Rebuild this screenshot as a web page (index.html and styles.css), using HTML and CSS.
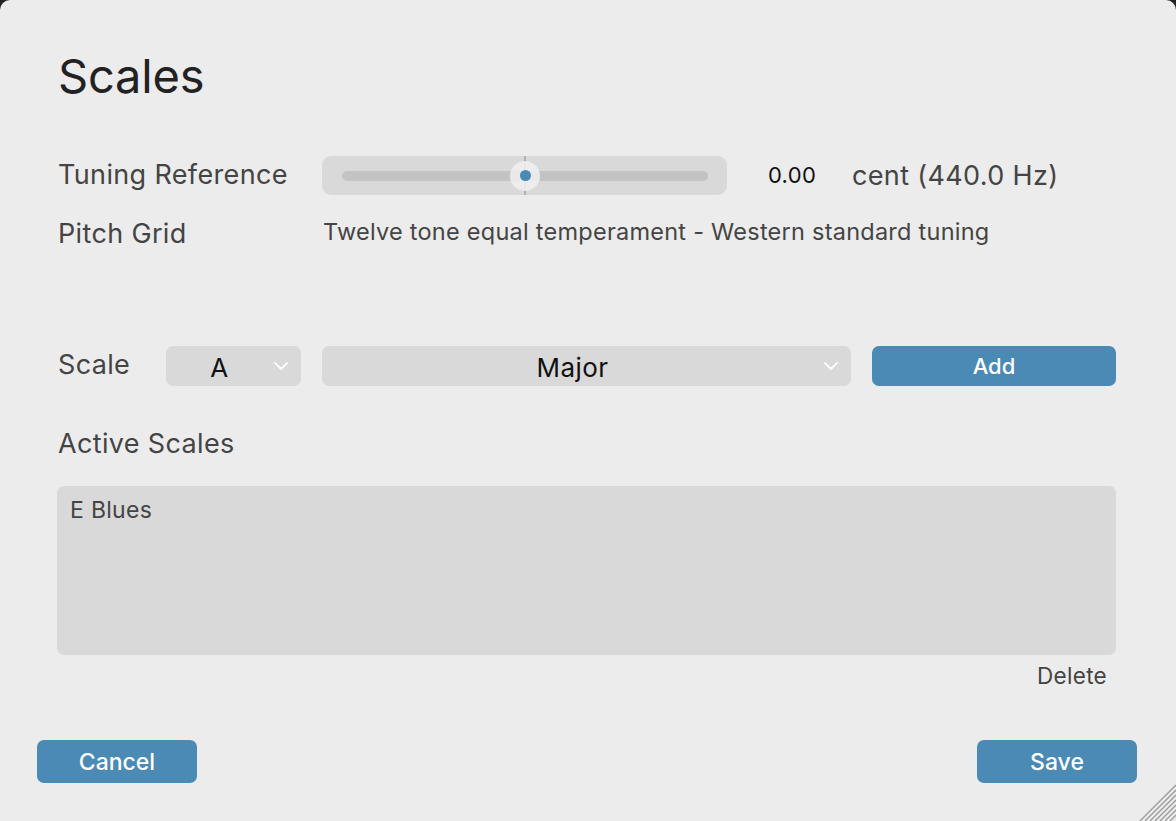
FILE: index.html
```html
<!DOCTYPE html>
<html>
<head>
<meta charset="utf-8">
<link rel="stylesheet" href="styles.css">
</head>
<body>
<div class="window">
  <h1 class="title">Scales</h1>
  <div class="row tuning">
    <div class="label">Tuning Reference</div>
    <div class="slider">
      <div class="track"></div>
      <div class="center-line"></div>
      <div class="thumb"><div class="dot"></div></div>
    </div>
    <div class="value">0.00</div>
    <div class="unit">cent (440.0 Hz)</div>
  </div>
  <div class="row pitch">
    <div class="label">Pitch Grid</div>
    <div class="pitch-text">Twelve tone equal temperament - Western standard tuning</div>
  </div>
  <div class="row scale">
    <div class="label">Scale</div>
    <div class="select key"><span class="sel-text">A</span>
      <svg class="chev" width="14" height="8" viewBox="0 0 14 8"><path d="M1 1 L7 7 L13 1" fill="none" stroke="#fff" stroke-width="1.8" stroke-linecap="round" stroke-linejoin="round"/></svg>
    </div>
    <div class="select mode"><span class="sel-text">Major</span>
      <svg class="chev" width="14" height="8" viewBox="0 0 14 8"><path d="M1 1 L7 7 L13 1" fill="none" stroke="#fff" stroke-width="1.8" stroke-linecap="round" stroke-linejoin="round"/></svg>
    </div>
    <button class="btn add">Add</button>
  </div>
  <div class="label active-label">Active Scales</div>
  <div class="list">
    <div class="item">E Blues</div>
  </div>
  <div class="delete-row"><span class="delete">Delete</span></div>
  <div class="footer">
    <button class="btn big">Cancel</button>
    <button class="btn big">Save</button>
  </div>
  <svg class="grip" width="37" height="37" viewBox="0 0 37 37">
    <g stroke="#9a9a9a" stroke-width="1.3">
      <line x1="37" y1="1" x2="1" y2="37"/>
      <line x1="37" y1="6" x2="6" y2="37"/>
      <line x1="37" y1="11" x2="11" y2="37"/>
      <line x1="37" y1="16" x2="16" y2="37"/>
      <line x1="37" y1="21" x2="21" y2="37"/>
      <line x1="37" y1="26" x2="26" y2="37"/>
      <line x1="37" y1="31" x2="31" y2="37"/>
    </g>
  </svg>
</div>
</body>
</html>
```
FILE: styles.css
```css
html, body {
  margin: 0;
  padding: 0;
  background: #232323;
  width: 1176px;
  height: 821px;
  overflow: hidden;
}
.window {
  position: relative;
  box-sizing: border-box;
  width: 1176px;
  height: 821px;
  background: #ececec;
  border-radius: 10px 10px 0 0;
  font-family: Inter, "Noto Sans", sans-serif;
  color: #444;
  padding: 0 60px 0 58px;
}
.title {
  margin: 0;
  padding-top: 47px;
  font-size: 47px;
  font-weight: 400;
  color: #222;
  line-height: 58px;
  letter-spacing: -0.2px;
}
.row {
  display: flex;
  align-items: center;
}
.label {
  font-size: 27px;
  color: #444;
  line-height: 32px;
  letter-spacing: 0.35px;
  white-space: nowrap;
}
.tuning {
  margin-top: 50px;
  height: 40px;
}
.tuning .label {
  width: 264px;
}
.slider {
  position: relative;
  width: 405px;
  height: 39px;
  background: #d9d9d9;
  border-radius: 9px;
}
.track {
  position: absolute;
  left: 20px;
  right: 19px;
  top: 15px;
  height: 10px;
  border-radius: 5px;
  background: #c3c3c3;
}
.center-line {
  position: absolute;
  left: 202px;
  top: 0;
  bottom: 0;
  width: 1.5px;
  background: #b2b2b2;
}
.thumb {
  position: absolute;
  left: 188px;
  top: 5px;
  width: 30px;
  height: 30px;
  border-radius: 50%;
  background: rgba(240,240,240,0.85);
  display: flex;
  align-items: center;
  justify-content: center;
}
.dot {
  width: 11px;
  height: 11px;
  border-radius: 50%;
  background: #4a8ab5;
}
.value {
  margin-left: 41px;
  font-size: 22px;
  letter-spacing: 0.3px;
  color: #111;
  width: 84px;
}
.unit {
  font-size: 27px;
  letter-spacing: 0.35px;
  color: #444;
  white-space: nowrap;
}
.pitch {
  margin-top: 19px;
  height: 40px;
}
.pitch .label {
  width: 265px;
}
.pitch-text {
  font-size: 23.5px;
  letter-spacing: 0.25px;
  color: #444;
  margin-top: -6px;
  white-space: nowrap;
}
.scale {
  margin-top: 92px;
  height: 40px;
}
.scale .label {
  width: 108px;
  margin-top: -2px;
}
.select {
  position: relative;
  box-sizing: border-box;
  height: 40px;
  background: #d9d9d9;
  border-radius: 7px;
  display: flex;
  align-items: center;
  justify-content: center;
  padding-right: 28px;
}
.sel-text {
  font-size: 26px;
  letter-spacing: 0.4px;
  color: #111;
  margin-top: 2px;
}
.key {
  width: 135px;
  margin-right: 21px;
}
.mode {
  width: 529px;
  margin-right: 21px;
}
.chev {
  position: absolute;
  right: 13px;
  top: 16px;
}
.btn {
  border: none;
  background: #4a8ab5;
  color: #fff;
  font-family: Inter, "Noto Sans", sans-serif;
  border-radius: 7px;
  padding: 0;
  cursor: default;
}
.add {
  width: 244px;
  height: 40px;
  font-size: 22px;
  font-weight: 500;
}
.active-label {
  margin-top: 42px;
}
.list {
  margin-top: 26px;
  margin-left: -1px;
  height: 169px;
  background: #d9d9d9;
  border-radius: 7px;
  padding: 10px 13px;
  box-sizing: border-box;
}
.item {
  font-size: 23px;
  letter-spacing: 0.3px;
  color: #444;
  line-height: 28px;
}
.delete-row {
  display: flex;
  justify-content: flex-end;
  margin-top: 7px;
  padding-right: 9px;
}
.delete {
  font-size: 22.5px;
  letter-spacing: 0.3px;
  color: #444;
  line-height: 28px;
}
.footer {
  display: flex;
  justify-content: space-between;
  margin: 50px -20px 0 -21px;
}
.big {
  width: 160px;
  height: 43px;
  font-size: 23px;
  font-weight: 500;
}
.big:last-child {
  margin-right: -1px;
}
.grip {
  position: absolute;
  right: 0;
  bottom: 0;
}
```
